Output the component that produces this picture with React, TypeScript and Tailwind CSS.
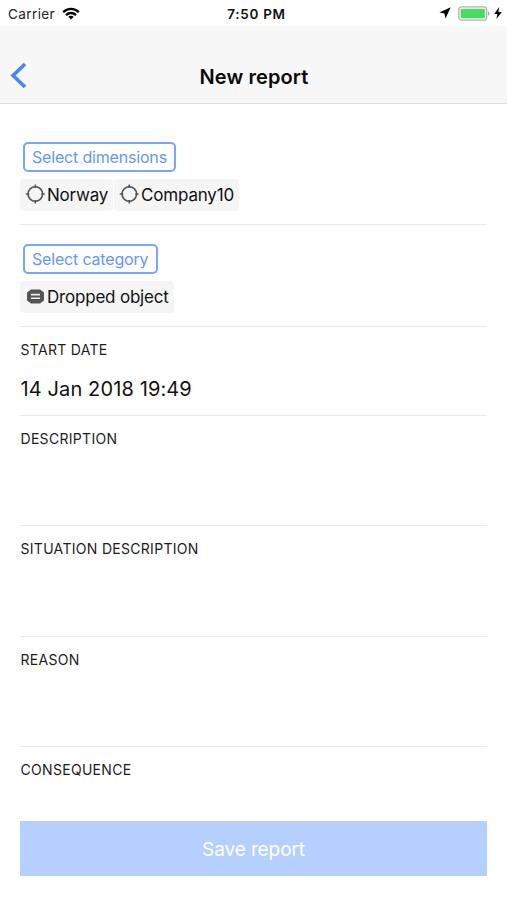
import type { ReactNode } from 'react'

const dimensions = ['Norway', 'Company10']

const textFields = [
  { label: 'DESCRIPTION' },
  { label: 'SITUATION DESCRIPTION' },
  { label: 'REASON' },
]

function StatusBar() {
  return (
    <div className="flex h-[26px] shrink-0 items-center justify-between bg-white pl-2 pr-[5px] pt-0.5">
      <div className="flex flex-1 items-center gap-[7px]">
        <span className="text-[13.5px] tracking-[0.4px] text-[#222]">Carrier</span>
        <svg width="18" height="13" viewBox="0 0 18 13" fill="none" stroke="#000" strokeWidth="2.3" className="mb-0.5">
          <path d="M1.2 5.2C5.6 0.8 12.4 0.8 16.8 5.2" />
          <path d="M4 8.1C6.9 5.3 11.1 5.3 14 8.1" />
          <path d="M9 12.4L6.3 9.7C7.8 8.3 10.2 8.3 11.7 9.7Z" fill="#000" stroke="none" />
        </svg>
      </div>
      <span className="pl-[3px] text-[13.5px] font-semibold tracking-[0.7px] text-[#111]">7:50 PM</span>
      <div className="mb-0.5 flex flex-1 items-center justify-end">
        <svg width="12" height="12" viewBox="0 0 12 12" className="mr-[7px]">
          <path d="M11.7 0.3L6.5 11.5L5.4 6.6L0.4 5.5Z" fill="#000" />
        </svg>
        <svg width="33" height="15" viewBox="0 0 33 15" className="mr-[3px]">
          <rect x="0.8" y="0.8" width="27.8" height="13.4" rx="2.8" fill="#fff" stroke="#b0b0b0" strokeWidth="1.3" />
          <rect x="2.6" y="2.8" width="24.2" height="9.4" rx="0.6" fill="#4cd964" />
          <path d="M30 5.3C31.6 5.9 31.6 9.1 30 9.7Z" fill="#999" />
        </svg>
        <svg width="8" height="12" viewBox="0 0 8 12">
          <path d="M5.3 0L0.2 6.9H3.4L2.4 12L7.8 4.9H4.4Z" fill="#000" />
        </svg>
      </div>
    </div>
  )
}

function Header() {
  return (
    <header className="flex h-[78px] shrink-0 items-end border-b border-[#dcdcdc] bg-[#f7f7f7] px-2.5 pb-[13px]">
      <button className="mb-px flex w-10 items-center" aria-label="Back">
        <svg width="17" height="27" viewBox="0 0 17 27" fill="none" stroke="#4787f8" strokeWidth="3.6">
          <path d="M15 2L3 13.5L15 25" />
        </svg>
      </button>
      <h1 className="flex-1 pl-px text-center text-[20px] font-semibold leading-[26px] tracking-[0.1px] text-[#0a0a0a]">New report</h1>
      <div className="w-10" />
    </header>
  )
}

function DimensionIcon() {
  return (
    <svg width="20" height="20" viewBox="0 0 20 20" fill="none" stroke="#555" strokeWidth="1.6" className="mb-0.5">
      <circle cx="10.3" cy="10" r="7.3" />
      <path d="M10.3 0.5V4M10.3 16V19.5M0.8 10H4.3M16.3 10H19.8" />
    </svg>
  )
}

function CategoryIcon() {
  return (
    <svg width="20" height="15" viewBox="0 0 20 15" className="mb-0.5">
      <path d="M6 0.5H15L19 3.5V11.5L15 14.5H6L2 11.5V3.5Z" fill="#555" />
      <path d="M6 5.6H15M6 9.3H15" stroke="#eee" strokeWidth="1.6" />
    </svg>
  )
}

function SelectButton({ children }: { children: ReactNode }) {
  return (
    <button className="ml-[2.5px] flex h-[30px] items-center rounded-[5px] border-2 border-[#79a6fa] bg-white px-[7.5px] text-[16px] tracking-[-0.18px] text-[#6398f7]">
      {children}
    </button>
  )
}

function Chip({ icon, children }: { icon: ReactNode; children: ReactNode }) {
  return (
    <span className="flex h-8 items-center rounded-[4px] bg-[#f5f5f5] px-[5px] text-[17px] tracking-[-0.2px] text-[#111]">
      {icon}
      <span className="ml-0.5 pt-0.5">{children}</span>
    </span>
  )
}

function FieldLabel({ children }: { children: ReactNode }) {
  return <div className="pl-[0.5px] text-[14px] leading-5 tracking-[0.3px] text-[#1c1c1c]">{children}</div>
}

export default function App() {
  return (
    <div
      className="flex h-[900px] w-[507px] flex-col overflow-hidden bg-white"
      style={{ fontFamily: 'Inter, "Liberation Sans", sans-serif' }}
    >
      <StatusBar />
      <Header />

      <main className="flex flex-1 flex-col px-5">
        {/* Dimensions */}
        <section className="flex h-[121px] flex-col items-start border-b border-[#e9e9e9] pt-[38px]">
          <SelectButton>Select dimensions</SelectButton>
          <div className="mt-[7px] flex gap-px">
            {dimensions.map((name) => (
              <Chip key={name} icon={<DimensionIcon />}>{name}</Chip>
            ))}
          </div>
        </section>

        {/* Category */}
        <section className="flex h-[102px] flex-col items-start border-b border-[#e9e9e9] pt-[19px]">
          <SelectButton>Select category</SelectButton>
          <div className="mt-[7px] flex">
            <Chip icon={<CategoryIcon />}>Dropped object</Chip>
          </div>
        </section>

        {/* Date */}
        <section className="h-[89px] border-b border-[#e9e9e9] pt-[13px]">
          <FieldLabel>START DATE</FieldLabel>
          <div className="mt-4 pl-[0.5px] text-[20px] leading-[26px] tracking-[0.12px] text-[#111]">14 Jan 2018 19:49</div>
        </section>

        {textFields.map(({ label }) => (
          <section key={label} className="h-[110.33px] border-b border-[#e9e9e9] pt-[13px]">
            <FieldLabel>{label}</FieldLabel>
          </section>
        ))}

        <section className="pt-[13px]">
          <FieldLabel>CONSEQUENCE</FieldLabel>
        </section>

        <button className="mb-6 mt-auto flex h-[55px] items-center justify-center bg-[#b5d0ff] pt-[3px] text-[19px] tracking-[-0.1px] text-white">
          Save report
        </button>
      </main>
    </div>
  )
}
